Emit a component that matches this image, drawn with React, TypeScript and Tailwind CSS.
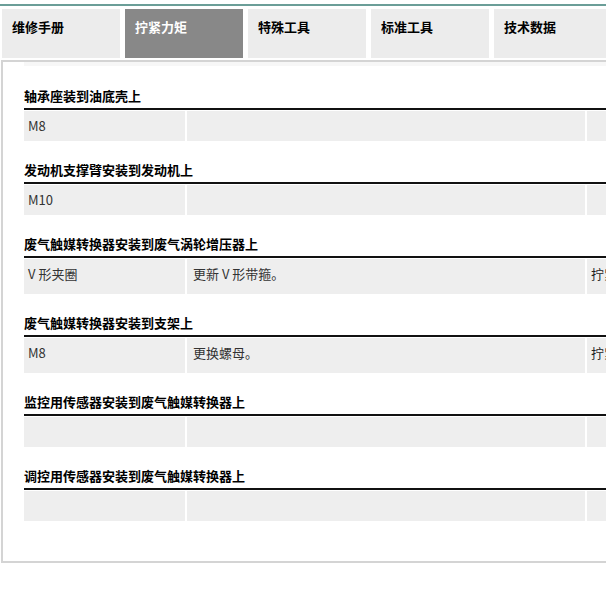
const tabs = ["维修手册", "拧紧力矩", "特殊工具", "标准工具", "技术数据"];

interface Row {
  title: string;
  cells: [string, string, string];
  height: string;
}

const rows: Row[] = [
  { title: "轴承座装到油底壳上", cells: ["M8", "", ""], height: "h-[30px]" },
  { title: "发动机支撑臂安装到发动机上", cells: ["M10", "", ""], height: "h-[30px]" },
  {
    title: "废气触媒转换器安装到废气涡轮增压器上",
    cells: ["V 形夹圈", "更新 V 形带箍。", "拧紧力矩"],
    height: "h-[35px]",
  },
  {
    title: "废气触媒转换器安装到支架上",
    cells: ["M8", "更换螺母。", "拧紧力矩"],
    height: "h-[35px]",
  },
  { title: "监控用传感器安装到废气触媒转换器上", cells: ["", "", ""], height: "h-[30px]" },
  { title: "调控用传感器安装到废气触媒转换器上", cells: ["", "", ""], height: "h-[30px]" },
];

function Section({ row, first }: { row: Row; first: boolean }) {
  return (
    <div className={first ? "pt-[22px]" : "pt-[21px]"}>
      <h3 className="text-[13px] leading-[16px] font-bold text-black pb-[4px]">{row.title}</h3>
      <div className="h-[2px] bg-[#111]" />
      <div className={`mt-[1px] flex gap-[2px] ${row.height}`}>
        <div className="w-[161px] shrink-0 bg-[#eeeeee] pl-[4px] pt-[7px] text-[13px] leading-[16px] text-[#333]">
          {row.cells[0]}
        </div>
        <div className="w-[398px] shrink-0 bg-[#eeeeee] pl-[6px] pt-[7px] text-[13px] leading-[16px] text-[#333]">
          {row.cells[1]}
        </div>
        <div className="w-[80px] shrink-0 bg-[#eeeeee] pl-[4px] pt-[7px] text-[13px] leading-[16px] text-[#222] whitespace-nowrap overflow-hidden">
          {row.cells[2]}
        </div>
      </div>
    </div>
  );
}

export default function App() {
  return (
    <div
      className="w-full overflow-hidden bg-white pt-[4px] pb-[40px]"
      style={{ fontFamily: '"Noto Sans CJK SC", "Liberation Sans", sans-serif' }}
    >
      <div className="w-[660px]">
        <div className="h-[2px] bg-[#6b9e98]" />
        <div className="mt-[3px] flex gap-[5px] pl-[2px]">
          {tabs.map((t, i) => (
            <div
              key={t}
              className={`w-[118px] h-[49px] shrink-0 pl-[10px] pt-[9px] text-[13px] leading-[18px] font-bold ${
                i === 1 ? "bg-[#888888] text-white" : "bg-[#ececec] text-black"
              }`}
            >
              {t}
            </div>
          ))}
        </div>
        <div className="mt-[2px] ml-[1px] border-2 border-[#d4d4d4] pl-[21px] pb-[40px]">
          <div className="h-[4px] bg-[#f7f7f7]" />
          {rows.map((r, i) => (
            <Section key={r.title} row={r} first={i === 0} />
          ))}
        </div>
      </div>
    </div>
  );
}
